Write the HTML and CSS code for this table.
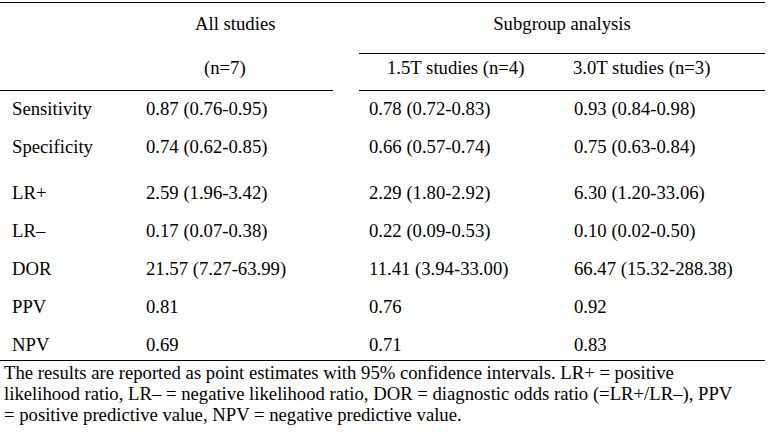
FILE: index.html
```html
<!DOCTYPE html>
<html lang="en">
<head>
<meta charset="utf-8">
<title>Diagnostic accuracy</title>
<link rel="stylesheet" href="styles.css">
</head>
<body>
<table class="results">
  <colgroup>
    <col class="c-label">
    <col class="c-all">
    <col class="c-gap">
    <col class="c-15">
    <col class="c-30">
  </colgroup>
  <thead>
    <tr class="head-top">
      <th></th>
      <th class="h-all">All studies</th>
      <th class="gap"></th>
      <th class="h-sub" colspan="2">Subgroup analysis</th>
    </tr>
    <tr class="head-bottom">
      <th class="ruled"></th>
      <th class="ruled h-n">(n=7)</th>
      <th class="gap"></th>
      <th class="ruled h-15">1.5T studies (n=4)</th>
      <th class="ruled h-30">3.0T studies (n=3)</th>
    </tr>
  </thead>
  <tbody>
    <tr><td class="label">Sensitivity</td><td class="v-all">0.87 (0.76-0.95)</td><td class="gap"></td><td class="v-sub">0.78 (0.72-0.83)</td><td class="v-sub">0.93 (0.84-0.98)</td></tr>
    <tr class="group-end"><td class="label">Specificity</td><td class="v-all">0.74 (0.62-0.85)</td><td class="gap"></td><td class="v-sub">0.66 (0.57-0.74)</td><td class="v-sub">0.75 (0.63-0.84)</td></tr>
    <tr><td class="label">LR+</td><td class="v-all">2.59 (1.96-3.42)</td><td class="gap"></td><td class="v-sub">2.29 (1.80-2.92)</td><td class="v-sub">6.30 (1.20-33.06)</td></tr>
    <tr><td class="label">LR–</td><td class="v-all">0.17 (0.07-0.38)</td><td class="gap"></td><td class="v-sub">0.22 (0.09-0.53)</td><td class="v-sub">0.10 (0.02-0.50)</td></tr>
    <tr><td class="label">DOR</td><td class="v-all">21.57 (7.27-63.99)</td><td class="gap"></td><td class="v-sub">11.41 (3.94-33.00)</td><td class="v-sub">66.47 (15.32-288.38)</td></tr>
    <tr><td class="label">PPV</td><td class="v-all">0.81</td><td class="gap"></td><td class="v-sub">0.76</td><td class="v-sub">0.92</td></tr>
    <tr class="last"><td class="label">NPV</td><td class="v-all">0.69</td><td class="gap"></td><td class="v-sub">0.71</td><td class="v-sub">0.83</td></tr>
  </tbody>
</table>
<p class="note">The results are reported as point estimates with 95% confidence intervals. LR+ = positive likelihood ratio, LR– = negative likelihood ratio, DOR = diagnostic odds ratio (=LR+/LR–), PPV = positive predictive value, NPV = negative predictive value.</p>
</body>
</html>
```

FILE: styles.css
```css
html, body {
  margin: 0;
  padding: 0;
  background: #ffffff;
}

body {
  font-family: "Liberation Serif", "Times New Roman", serif;
  font-size: 18.7px;
  line-height: 21px;
  color: #000000;
}

.results {
  width: 765px;
  margin-top: 2px;
  border-collapse: separate;
  border-spacing: 0;
  border-top: 1px solid #000;
  table-layout: fixed;
}

.c-label { width: 134px; }
.c-all { width: 199px; }
.c-gap { width: 26px; }
.c-15 { width: 205px; }
.c-30 { width: 201px; }

.results th,
.results td {
  font-weight: normal;
  text-align: left;
  vertical-align: top;
  padding: 0;
  white-space: nowrap;
}

.head-top th {
  padding-top: 10px;
  padding-bottom: 19px;
}

.head-top .h-all {
  padding-left: 61px;
}

.head-top .h-sub {
  text-align: center;
  border-bottom: 1px solid #000;
}

.head-bottom th {
  padding-top: 3px;
  padding-bottom: 12px;
}

.head-bottom .ruled {
  border-bottom: 1px solid #000;
}

.head-bottom .h-n { padding-left: 70px; }
.head-bottom .h-15 { padding-left: 28px; }
.head-bottom .h-30 { padding-left: 9px; }

.results tbody td {
  padding-top: 7px;
  padding-bottom: 10px;
}

.results tbody .group-end td {
  padding-bottom: 18px;
}

.results tbody .last td {
  padding-bottom: 5px;
  border-bottom: 1px solid #000;
}

.results .label { padding-left: 12px; }
.results .v-all { padding-left: 12px; }
.results .v-sub { padding-left: 10px; }

.note {
  margin: 0;
  padding: 1px 0 0 4px;
  width: 738px;
}
```
